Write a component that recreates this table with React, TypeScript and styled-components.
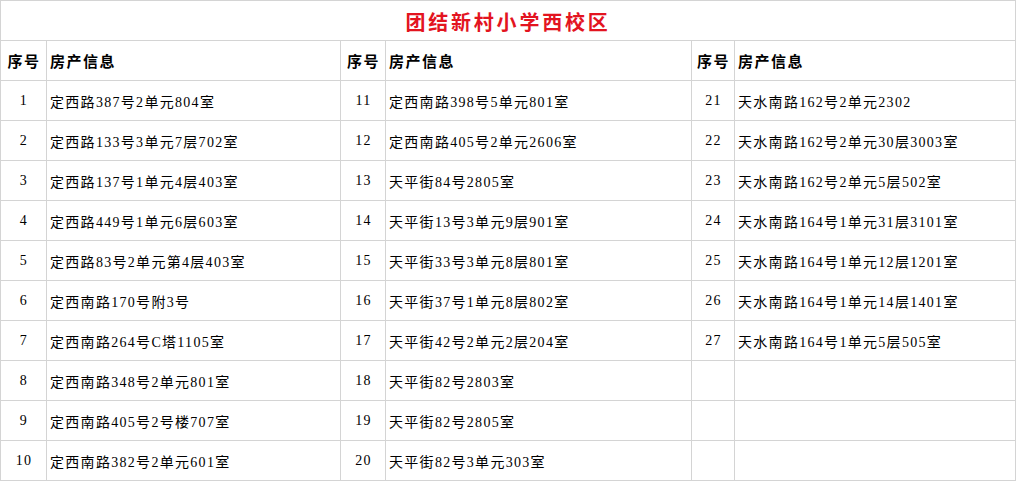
import styled, { createGlobalStyle } from 'styled-components';

const GlobalStyle = createGlobalStyle`
	html, body {
		margin: 0;
		padding: 0;
		background: #ffffff;
	}
	body {
		font-family: "Liberation Serif", "Noto Sans CJK SC", serif;
		color: #000000;
	}
`;

const groups: [number, string][][] = [
	[
		[1, '定西路387号2单元804室'],
		[2, '定西路133号3单元7层702室'],
		[3, '定西路137号1单元4层403室'],
		[4, '定西路449号1单元6层603室'],
		[5, '定西路83号2单元第4层403室'],
		[6, '定西南路170号附3号'],
		[7, '定西南路264号C塔1105室'],
		[8, '定西南路348号2单元801室'],
		[9, '定西南路405号2号楼707室'],
		[10, '定西南路382号2单元601室'],
	],
	[
		[11, '定西南路398号5单元801室'],
		[12, '定西南路405号2单元2606室'],
		[13, '天平街84号2805室'],
		[14, '天平街13号3单元9层901室'],
		[15, '天平街33号3单元8层801室'],
		[16, '天平街37号1单元8层802室'],
		[17, '天平街42号2单元2层204室'],
		[18, '天平街82号2803室'],
		[19, '天平街82号2805室'],
		[20, '天平街82号3单元303室'],
	],
	[
		[21, '天水南路162号2单元2302'],
		[22, '天水南路162号2单元30层3003室'],
		[23, '天水南路162号2单元5层502室'],
		[24, '天水南路164号1单元31层3101室'],
		[25, '天水南路164号1单元12层1201室'],
		[26, '天水南路164号1单元14层1401室'],
		[27, '天水南路164号1单元5层505室'],
	],
];

export default function App() {
	const rows = Array.from({ length: 10 }, (_, i) => i);

	return (
		<>
			<GlobalStyle />
			<Sheet>
				<Title>团结新村小学西校区</Title>
				{groups.map((_, g) => (
					<Pair key={`h${g}`}>
						<HeadCell $center>序号</HeadCell>
						<HeadCell>房产信息</HeadCell>
					</Pair>
				))}
				{rows.map((r) =>
					groups.map((group, g) => {
						const item = group[r];
						return (
							<Pair key={`${r}-${g}`}>
								<NumCell>{item ? item[0] : ''}</NumCell>
								<InfoCell>{item ? item[1] : ''}</InfoCell>
							</Pair>
						);
					})
				)}
			</Sheet>
		</>
	);
}

const Sheet = styled.div`
	width: 1016px;
	display: grid;
	grid-template-columns: 45px 293px 44px 305px 42px 280px;
	grid-auto-rows: 39px;
	gap: 1px;
	padding: 1px;
	box-sizing: border-box;
	background: #d4d4d4;
`;

const Pair = styled.div`
	display: contents;
`;

const Cell = styled.div`
	background: #ffffff;
	display: flex;
	align-items: center;
	white-space: nowrap;
	overflow: hidden;
`;

const Title = styled(Cell)`
	grid-column: 1 / -1;
	justify-content: center;
	color: #e3141f;
	font-family: "Noto Sans CJK SC", sans-serif;
	font-size: 20px;
	font-weight: 700;
	letter-spacing: 2.8px;
	padding-top: 2px;
`;

const HeadCell = styled(Cell)<{ $center?: boolean }>`
	font-family: "Noto Sans CJK SC", sans-serif;
	font-size: 15px;
	font-weight: 700;
	letter-spacing: 1.5px;
	justify-content: ${(p) => (p.$center ? 'center' : 'flex-start')};
	padding-left: ${(p) => (p.$center ? '1px' : '3px')};
`;

const NumCell = styled(Cell)`
	justify-content: center;
	font-size: 14px;
	letter-spacing: 1.3px;
	padding-left: 1px;
`;

const InfoCell = styled(Cell)`
	font-size: 14px;
	letter-spacing: 1.3px;
	padding-left: 3px;
`;
